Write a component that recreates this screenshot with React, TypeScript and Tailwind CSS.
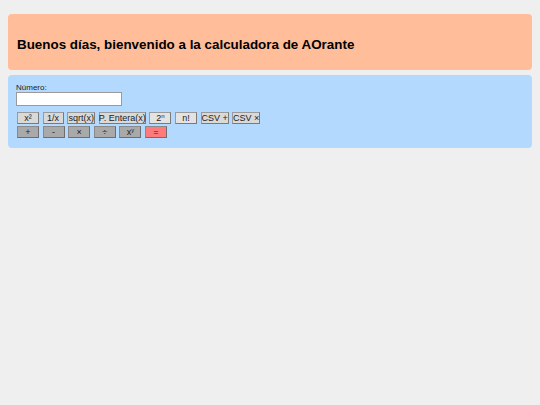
import React from "react";

const row1 = [
  { t: <>x²</>, w: "w-[22px]", bg: "bg-[#d9d9d9]" },
  { t: <>1/x</>, w: "w-[21px]", bg: "bg-[#d9d9d9]" },
  { t: <>sqrt(x)</>, w: "w-[28px]", bg: "bg-[#d9d9d9]" },
  { t: <>P. Entera(x)</>, w: "w-[47px]", bg: "bg-[#d9d9d9]" },
  { t: <>2<sup className="text-[6px]">n</sup></>, w: "w-[22px]", bg: "bg-[#e3e3e3]" },
  { t: <>n!</>, w: "w-[22px]", bg: "bg-[#e3e3e3]" },
  { t: <>CSV +</>, w: "w-[28px]", bg: "bg-[#d9d9d9]" },
  { t: <>CSV ×</>, w: "w-[28px]", bg: "bg-[#d9d9d9]" },
];

const row2 = [
  { t: <>+</>, bg: "bg-[#a9a9a9]" },
  { t: <>-</>, bg: "bg-[#a9a9a9]" },
  { t: <>×</>, bg: "bg-[#a9a9a9]" },
  { t: <>÷</>, bg: "bg-[#a9a9a9]" },
  { t: <>x<sup className="text-[6px]">y</sup></>, bg: "bg-[#a9a9a9]" },
  { t: <>=</>, bg: "bg-[#ff7b7b]" },
];

export default function App() {
  return (
    <div className="min-h-[405px] bg-[#efefef] px-2 pt-[14px] font-['Liberation_Sans',Arial,sans-serif] text-black">
      <div className="h-[56px] rounded-[4px] bg-[#ffbd99] pl-[9px] pt-[22px]">
        <h1 className="text-[13.4px] font-bold leading-[17px]">
          Buenos días, bienvenido a la calculadora de AOrante
        </h1>
      </div>
      <div className="mt-[5px] h-[73px] rounded-[4px] bg-[#b3d9ff] pl-[8px] pt-[8px]">
        <div className="text-[8px] leading-[9px] text-[#222]">Número:</div>
        <div className="h-[14px] w-[106px] border border-[#9a9a9a] bg-white" />
        <div className="mt-[6px] flex gap-[3.6px] pl-[1px]">
          {row1.map((b, i) => (
            <div
              key={i}
              className={`${b.w} ${b.bg} flex h-[12px] items-center justify-center whitespace-nowrap border border-[#7a7a7a] border-t-[#9a9a9a] border-l-[#9a9a9a] text-[9px] leading-none text-[#222]`}
            >
              <span>{b.t}</span>
            </div>
          ))}
        </div>
        <div className="mt-[2px] flex gap-[3.6px] pl-[1px]">
          {row2.map((b, i) => (
            <div
              key={i}
              className={`w-[22px] ${b.bg} flex h-[12px] items-center justify-center border border-[#6e6e6e] border-t-[#8a8a8a] border-l-[#8a8a8a] text-[9px] leading-none text-[#222]`}
            >
              <span>{b.t}</span>
            </div>
          ))}
        </div>
      </div>
    </div>
  );
}
